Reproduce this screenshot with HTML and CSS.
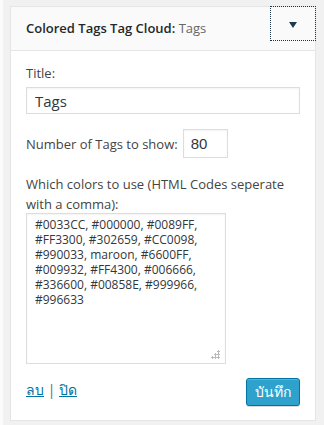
FILE: index.html
```html
<!DOCTYPE html>
<html>
<head>
<meta charset="utf-8">
<link rel="stylesheet" href="styles.css">
</head>
<body>
<div class="widget">
  <div class="widget-top">
    <h3 class="widget-title">Colored Tags Tag Cloud: <span class="in-title">Tags</span></h3>
    <button class="widget-action" type="button" aria-label="toggle"><span class="arrow"></span></button>
  </div>
  <div class="widget-inside">
    <div class="field">
      <label class="lbl" for="t">Title:</label>
      <input id="t" class="title-input" type="text" value="Tags">
    </div>
    <div class="field row">
      <label class="lbl" for="n">Number of Tags to show:</label>
      <input id="n" class="num-input" type="text" value="80">
    </div>
    <div class="field">
      <label class="lbl" for="c">Which colors to use (HTML Codes seperate with a comma):</label>
      <div class="ta-wrap">
        <textarea id="c" class="colors">#0033CC, #000000, #0089FF, #FF3300, #302659, #CC0098, #990033, maroon, #6600FF, #009932, #FF4300, #006666, #336600, #00858E, #999966, #996633</textarea>
      </div>
    </div>
    <div class="actions">
      <div class="links"><a href="#">ลบ</a> | <a href="#">ปิด</a></div>
      <button class="save" type="button">บันทึก</button>
    </div>
  </div>
</div>
</body>
</html>
```
FILE: styles.css
```css
html, body {
  margin: 0;
  padding: 0;
}
body {
  background: #f1f1f1;
  border-left: 3px solid #fbfbfb;
  min-height: 425px;
  box-sizing: border-box;
  padding: 6px 0 0 7px;
  font-family: "Open Sans", "Noto Sans", sans-serif;
  font-size: 13px;
  color: #444;
}
.widget {
  width: 306px;
  box-sizing: border-box;
  border: 1px solid #e5e5e5;
  background: #fff;
}
.widget-top {
  display: flex;
  align-items: flex-start;
  background: #fafafa;
  border-bottom: 1px solid #e5e5e5;
  height: 43px;
}
.widget-title {
  margin: 0;
  padding: 0 0 0 15px;
  line-height: 43px;
  font-size: 13px;
  font-weight: 600;
  color: #23282d;
  flex: 1;
}
.in-title {
  font-weight: 400;
  color: #666;
}
.widget-action {
  margin: -1px -1px 0 0;
  width: 46px;
  height: 35px;
  border: 1px dotted #1c3446;
  background: transparent;
  padding: 0;
  display: flex;
  align-items: center;
  justify-content: center;
}
.arrow {
  display: block;
  width: 0;
  height: 0;
  margin-top: 3px;
  border-left: 4px solid transparent;
  border-right: 4px solid transparent;
  border-top: 6px solid #1e3a4f;
}
.widget-inside {
  padding: 12px 15px 14px 15px;
}
.field {
  margin-bottom: 15px;
}
.field.row {
  margin-bottom: 16px;
}
.lbl {
  display: block;
  line-height: 20px;
  color: #444;
}
.title-input {
  display: block;
  margin-top: 4px;
  width: 274px;
  height: 27px;
  box-sizing: border-box;
  border: 1px solid #ddd;
  padding: 0 8px 0 8px;
  font-family: "Open Sans", sans-serif;
  font-size: 15px;
  color: #32373c;
  box-shadow: inset 0 1px 2px rgba(0,0,0,.05);
}
.row {
  display: flex;
  align-items: center;
  gap: 5px;
}
.row .lbl {
  display: inline;
}
.num-input {
  width: 45px;
  height: 29px;
  box-sizing: border-box;
  border: 1px solid #ddd;
  padding: 0 7px;
  font-family: "Liberation Sans", Arial, sans-serif;
  font-size: 15px;
  color: #32373c;
  box-shadow: inset 0 1px 2px rgba(0,0,0,.05);
}
.ta-wrap {
  position: relative;
  width: 200px;
  height: 151px;
  margin-top: -1px;
}
.ta-wrap::after {
  content: "";
  position: absolute;
  right: 6px;
  bottom: 5px;
  width: 9px;
  height: 9px;
  background:
    radial-gradient(circle, #bbb 1px, transparent 1.2px) 6px 0 / 3px 3px no-repeat,
    radial-gradient(circle, #bbb 1px, transparent 1.2px) 3px 3px / 3px 3px no-repeat,
    radial-gradient(circle, #bbb 1px, transparent 1.2px) 6px 3px / 3px 3px no-repeat,
    radial-gradient(circle, #bbb 1px, transparent 1.2px) 0 6px / 3px 3px no-repeat,
    radial-gradient(circle, #bbb 1px, transparent 1.2px) 3px 6px / 3px 3px no-repeat,
    radial-gradient(circle, #bbb 1px, transparent 1.2px) 6px 6px / 3px 3px no-repeat;
}
.colors {
  display: block;
  width: 200px;
  height: 151px;
  box-sizing: border-box;
  border: 1px solid #ddd;
  padding: 3px 8px;
  resize: none;
  font-family: "Open Sans", sans-serif;
  font-size: 12px;
  line-height: 15px;
  color: #32373c;
  box-shadow: inset 0 1px 2px rgba(0,0,0,.05);
}
.actions {
  display: flex;
  justify-content: space-between;
  align-items: flex-start;
  margin-top: -1px;
}
.links {
  padding-top: 2px;
  line-height: 20px;
  font-size: 14px;
  color: #666;
}
.links a {
  color: #0074a2;
  text-decoration: underline;
}
.save {
  width: 54px;
  height: 28px;
  box-sizing: border-box;
  background: #2ea2cc;
  border: 1px solid #0074a2;
  border-radius: 3px;
  box-shadow: inset 0 1px 0 rgba(120,200,230,.5), 0 1px 0 rgba(0,0,0,.15);
  color: #fff;
  font-family: "Open Sans", sans-serif;
  font-size: 14px;
  padding: 0;
}
```
